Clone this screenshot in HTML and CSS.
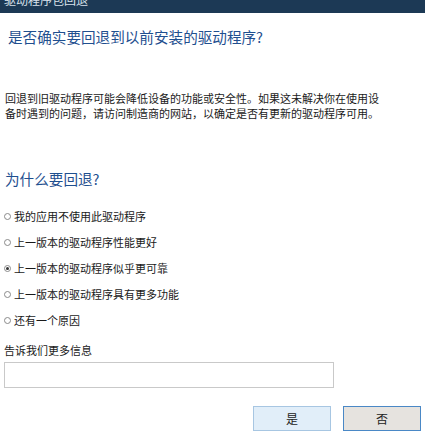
FILE: index.html
```html
<!DOCTYPE html>
<html lang="zh-CN">
<head>
  <meta charset="UTF-8" />
  <title>驱动程序包回退</title>
  <link rel="stylesheet" href="styles.css">
</head>
<body>
  <header class="titlebar"><span class="titlebar-text">驱动程序包回退</span></header>
  <main class="dialog">
    <h1 class="question">是否确实要回退到以前安装的驱动程序?</h1>
    <p class="warning">回退到旧驱动程序可能会降低设备的功能或安全性。如果这未解决你在使用设<br>备时遇到的问题，请访问制造商的网站，以确定是否有更新的驱动程序可用。</p>
    <h2 class="reason-title">为什么要回退?</h2>
    <ul class="reasons">
      <li class="reason"><span class="radio"></span>我的应用不使用此驱动程序</li>
      <li class="reason"><span class="radio"></span>上一版本的驱动程序性能更好</li>
      <li class="reason"><span class="radio checked"></span>上一版本的驱动程序似乎更可靠</li>
      <li class="reason"><span class="radio"></span>上一版本的驱动程序具有更多功能</li>
      <li class="reason"><span class="radio"></span>还有一个原因</li>
    </ul>
    <label class="more-label" for="more">告诉我们更多信息</label>
    <input class="more-input" id="more" type="text">
    <div class="buttons">
      <button class="btn">是</button>
      <button class="btn btn-focus">否</button>
    </div>
  </main>
</body>
</html>
```

FILE: styles.css
```css
body {
  margin: 0;
  width: 425px;
  height: 432px;
  overflow: hidden;
  background: #fff;
  color: #1a1a1a;
  font-family: "Noto Sans CJK SC", "Noto Sans", sans-serif;
}

.titlebar {
  height: 13px;
  overflow: hidden;
  background: #1c3955;
  color: #d9e2ec;
  font-size: 12px;
  line-height: 12px;
  padding-left: 4px;
}

.titlebar-text {
  display: block;
  margin-top: -6px;
}

.dialog {
  padding: 0 4px;
}

.question {
  margin: 14px 0 0 4px;
  font-size: 14.6px;
  line-height: 20px;
  font-weight: normal;
  color: #1f4f8f;
}

.warning {
  margin: 44px 0 0 1px;
  font-size: 11px;
  line-height: 15px;
}

.reason-title {
  margin: 48px 0 0 1px;
  font-size: 14.6px;
  line-height: 20px;
  font-weight: normal;
  color: #1f4f8f;
}

.reasons {
  list-style: none;
  margin: 14px 0 0;
  padding: 0;
}

.reason {
  display: flex;
  align-items: center;
  height: 26px;
  font-size: 11px;
}

.radio {
  width: 5px;
  height: 5px;
  border: 1px solid #8a8a8a;
  border-radius: 50%;
  margin-right: 3px;
  box-sizing: content-box;
  position: relative;
}

.radio.checked::after {
  content: "";
  position: absolute;
  left: 1px;
  top: 1px;
  width: 3px;
  height: 3px;
  border-radius: 50%;
  background: #333;
}

.more-label {
  display: block;
  margin-top: 10px;
  font-size: 11px;
  line-height: 14px;
}

.more-input {
  display: block;
  margin-top: 5px;
  width: 330px;
  height: 26px;
  box-sizing: border-box;
  border: 1px solid #c9c9c9;
  padding: 0 4px;
  outline: none;
}

.buttons {
  display: flex;
  justify-content: flex-end;
  gap: 12px;
  margin-top: 18px;
}

.btn {
  width: 78px;
  height: 25px;
  box-sizing: border-box;
  border: 1px solid #a7c6e2;
  background: #e1eef9;
  font-family: "Noto Sans CJK SC", sans-serif;
  font-size: 12px;
  color: #222;
  padding: 0;
}

.btn-focus {
  border-color: #4a88c6;
  background: #e6e3df;
}
```
